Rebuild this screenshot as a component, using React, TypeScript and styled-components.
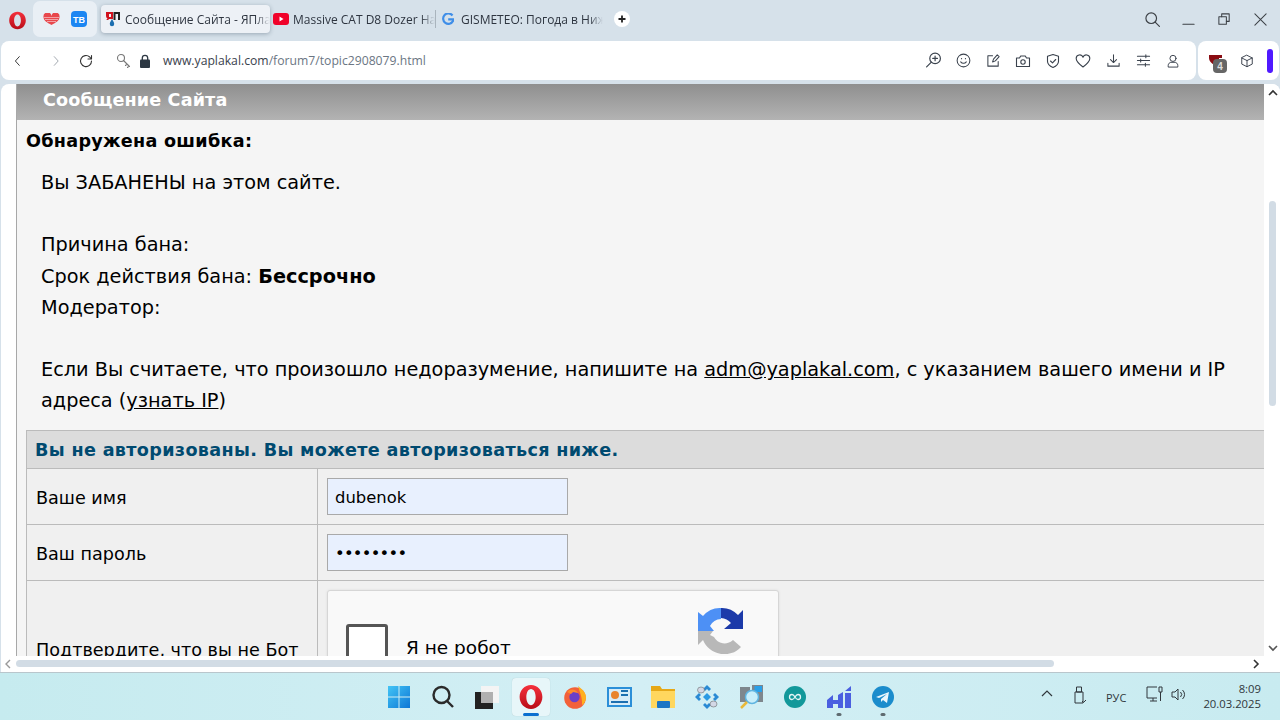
import React from "react";
import styled, { createGlobalStyle } from "styled-components";

const Global = createGlobalStyle`
  html, body { margin: 0; padding: 0; width: 1280px; height: 720px; overflow: hidden; background: #d6e1ea; }
  * { box-sizing: border-box; }
`;
const Screen = styled.div`width:1280px;height:720px;display:flex;flex-direction:column;overflow:hidden;font-family:"Open Sans","Noto Sans",sans-serif;`;
const Chrome = styled.div`height:673px;background:#d6e1ea;display:flex;flex-direction:column;flex:none;border-bottom:1px solid #b9c6cc;`;
const TabBar = styled.div`height:41px;display:flex;align-items:center;flex:none;padding-left:7px;`;
const Logo = styled.div`width:20px;display:flex;justify-content:center;margin-right:6px;`;
const Pinned = styled.div`width:64px;height:36px;border-radius:7px;background:#e9eff5;display:flex;align-items:center;justify-content:center;gap:11px;margin-top:-3px;`;
const Tab = styled.div<{ $active?: boolean; $w: number; $pad: number; $gap: number }>`
  width:${p => p.$w}px;height:28px;display:flex;align-items:center;gap:${p => p.$gap}px;padding-left:${p => p.$pad}px;overflow:hidden;white-space:nowrap;
  font-size:12px;color:#2e3540;border-radius:4px;margin-top:-3px;position:relative;flex:none;
  ${p => p.$active ? "background:#edf1f6;box-shadow:0 1px 4px rgba(40,60,80,.35);margin-left:4px;" : ""}
`;
const TabText = styled.span`flex:1;overflow:hidden;-webkit-mask-image:linear-gradient(90deg,#000 90%,transparent);mask-image:linear-gradient(90deg,#000 90%,transparent);`;
const Sep = styled.div`width:1px;height:18px;background:#a9b4bd;margin-top:-3px;flex:none;`;
const Plus = styled.div`width:16px;height:16px;border-radius:50%;background:#fff;margin:-3px 0 0 11px;display:flex;align-items:center;justify-content:center;flex:none;`;
const WinCtl = styled.div`margin-left:auto;display:flex;align-items:center;width:146px;height:38px;margin-top:-3px;color:#3c4046;flex:none;`;
const WinSlot = styled.div<{ $w: number }>`width:${p => p.$w}px;display:flex;justify-content:center;`;
const AddrRow = styled.div`height:39px;display:flex;gap:2px;flex:none;`;
const AddrBar = styled.div`width:1195px;margin-left:1px;background:#fff;border-radius:8px;display:flex;align-items:center;padding-left:10px;`;
const ExtBar = styled.div`width:81px;background:#fff;border-radius:8px;display:flex;align-items:center;padding-left:10px;position:relative;`;
const Nav = styled.div<{ $w: number }>`width:${p => p.$w}px;display:flex;flex:none;`;
const Url = styled.div`font-size:12.2px;color:#6b7683;margin-left:0;white-space:nowrap;flex:1;b{font-weight:400;color:#3a424d;}`;
const Tools = styled.div`display:flex;align-items:center;padding-right:8px;color:#3a424d;`;
const ToolSlot = styled.div`width:30px;display:flex;justify-content:center;`;
const Badge = styled.div`position:absolute;left:15px;top:18px;width:14px;height:14px;border-radius:4px;background:#666;color:#ddd;font:700 10px "Liberation Sans",sans-serif;display:flex;align-items:center;justify-content:center;`;
const CubeSlot = styled(Nav)`margin-left:16px;color:#3a424d;`;
const Pill = styled.div`width:6px;height:24px;background:#5019ff;border-radius:3px;margin-left:13px;`;
const ViewWrap = styled.div`flex:1;min-height:0;display:flex;flex-direction:column;padding-top:4px;`;
const View = styled.div`flex:1;min-height:0;background:#fff;border-radius:8px 8px 0 0;margin-left:1px;display:flex;overflow:hidden;`;
const PageClip = styled.div`width:1263px;flex:none;overflow:hidden;padding-left:15px;`;
const Page = styled.div`width:1400px;border-left:1px solid #a8a8a8;background:#f5f5f5;height:572px;font-family:"DejaVu Sans",Verdana,sans-serif;color:#000;`;
const Title = styled.div`height:36px;background:linear-gradient(#8f8f8f,#b3b3b3);color:#fff;font-weight:700;font-size:17.6px;letter-spacing:.13px;line-height:32px;padding-left:26px;`;
const Err = styled.div`font-weight:700;font-size:17.6px;letter-spacing:.28px;line-height:20px;padding:11px 0 0 9px;`;
const Msg = styled.div`font-size:19.3px;line-height:31.2px;padding:16px 0 0 24px;width:1210px;height:279px;`;
const Mail = styled.a`color:#000;text-decoration:underline;`;
const Form = styled.div`margin-left:9px;width:1400px;border:1px solid #bbb;border-bottom:0;background:#f0f0f0;`;
const FormHead = styled.div`height:37px;background:#dcdcdc;color:#004a70;font-weight:700;font-size:17.6px;letter-spacing:.33px;line-height:39px;padding-left:8px;`;
const FormRow = styled.div<{ $h: number }>`height:${p => p.$h}px;border-top:1px solid #bbb;display:flex;`;
const Label = styled.div`width:291px;border-right:1px solid #bbb;font-size:17.6px;padding:2px 0 0 9px;display:flex;align-items:center;flex:none;`;
const LabelEnd = styled(Label)`align-items:flex-start;padding-top:59px;`;
const Field = styled.div`padding:9px 0 0 9px;`;
const Input = styled.div`width:241px;height:37px;background:#e8f0fe;border:1px solid #a9a9a9;font-size:16.4px;line-height:37px;padding-left:7px;`;
const Dots = styled.span`letter-spacing:-.75px;`;
const Captcha = styled.div`width:452px;height:90px;background:#f9f9f9;border:1px solid #d6d6d6;border-radius:3px;box-shadow:0 0 3px rgba(0,0,0,.08);display:flex;position:relative;`;
const Check = styled.div`width:42px;height:42px;margin:33px 0 0 18px;background:#fff;border:3px solid #555;border-radius:3px;`;
const CapText = styled.div`font-size:18.5px;margin:46px 0 0 18px;`;
const CapLogo = styled.svg`position:absolute;left:370px;top:17px;`;
const VBar = styled.div`width:16px;flex:none;background:#fff;position:relative;`;
const VThumb = styled.div`position:absolute;left:5px;top:117px;width:7px;height:205px;background:#d2dce5;border-radius:3.5px;`;
const Arrow = styled.svg<{ $t: number }>`position:absolute;left:4px;top:${p => p.$t}px;`;
const HBar = styled.div`height:16px;background:#fff;margin-left:1px;flex:none;position:relative;`;
const HThumb = styled.div`position:absolute;left:15px;top:4px;width:1038px;height:7px;background:#d2dce5;border-radius:3.5px;`;
const HArrow = styled.svg<{ $l: number }>`position:absolute;left:${p => p.$l}px;top:3px;`;
const Taskbar = styled.div`flex:1;background:linear-gradient(90deg,#c6ebef,#d3eff5 50%,#c8ebf0);display:flex;align-items:center;position:relative;`;
const Center = styled.div`position:absolute;left:377px;top:0;height:47px;display:flex;align-items:center;`;
const TItem = styled.div<{ $on?: boolean }>`width:44px;height:38px;display:flex;align-items:center;justify-content:center;position:relative;border-radius:4px;${p => p.$on ? "background:#e7f6f9;box-shadow:0 0 1px rgba(0,0,0,.2);width:38px;margin:0 3px;" : ""}`;
const Run = styled.div<{ $on?: boolean }>`position:absolute;bottom:0;left:50%;transform:translateX(-50%);height:3px;border-radius:2px;width:${p => p.$on ? 16 : 5}px;background:${p => p.$on ? "#0a6fd0" : "#5f6b70"};`;
const Tray = styled.div`position:absolute;left:1040px;right:0;top:0;height:47px;color:#30373c;font-size:10px;`;
const TrayIcon = styled.svg<{ $l: number; $t: number }>`position:absolute;left:${p => p.$l}px;top:${p => p.$t}px;`;
const Lang = styled.div`position:absolute;left:66px;top:17px;font-size:11px;`;
const Clock = styled.div`position:absolute;right:19px;top:8px;text-align:right;line-height:15px;font-size:11.3px;`;

const I = ({ children, s = 16 }: { children: React.ReactNode; s?: number }) => (
  <svg width={s} height={s} viewBox="0 0 16 16" fill="none" stroke="currentColor" strokeWidth="1.1" strokeLinecap="round" strokeLinejoin="round">{children}</svg>
);
const Opera = ({ s = 16, id }: { s?: number; id: string }) => (
  <svg width={s} height={s} viewBox="0 0 24 24">
    <defs><linearGradient id={id} x1="0" y1="0" x2="0" y2="1"><stop offset="0" stopColor="#f5303c" /><stop offset="1" stopColor="#b80d18" /></linearGradient></defs>
    <path fillRule="evenodd" d="M12 1c6 0 10.500 5 10.500 11S18 23 12 23 1.500 18 1.500 12 6 1 12 1zm0 3.500c-2.500 0-4.300 3.300-4.300 7.500s1.800 7.500 4.300 7.500 4.300-3.300 4.300-7.500-1.800-7.500-4.300-7.500z" fill={`url(#${id})`} />
  </svg>
);

export default function App() {
  return (
    <Screen>
      <Global />
      <Chrome>
        <TabBar>
          <Logo><Opera s={19} id="op1" /></Logo>
          <Pinned>
            <svg width="17" height="12" viewBox="0 0 17 12"><path d="M8.500 12C4 9.500 .5 7.500 .5 4a3.700 3.700 0 0 1 8-1 3.700 3.700 0 0 1 8 1c0 3.500-3.500 5.500-8 8z" fill="#e8474c" /><path d="M1 4.500h15M2 6.500h13M4 8.500h9" stroke="#f7c9cb" strokeWidth=".7" /></svg>
            <svg width="16" height="16" viewBox="0 0 16 16"><rect width="16" height="16" rx="4" fill="#1c86f2" /><text x="8" y="11.500" textAnchor="middle" fill="#fff" fontSize="9" fontWeight="700" fontFamily="Liberation Sans">ТВ</text></svg>
          </Pinned>
          <Tab $active $w={169} $pad={5} $gap={5}>
            <svg width="14" height="16" viewBox="0 0 14 16" style={{ flex: "none" }}><path fillRule="evenodd" d="M0 1h7v7H5.200v0L5 8H3.200L2 9H.2l1.300-1.500C.5 7 0 6 0 4.500zM3 3v3h2V3z" fill="#d0121e" /><path d="M7.500 1H14v8h-2V3H9.500v6h-2z" fill="#222" /><path d="M6 8c1.200 2 2.200 3.500 2.200 5a2.200 2.200 0 0 1-4.400 0C3.800 11.500 4.800 10 6 8z" fill="#1c6fb0" /></svg>
            <TabText>Сообщение Сайта - ЯПлакал</TabText>
          </Tab>
          <Tab $w={165} $pad={3} $gap={4}>
            <svg width="16" height="12" viewBox="0 0 16 12" style={{ flex: "none" }}><rect width="16" height="12" rx="3" fill="#f0022a" /><path d="M6.500 3.500v5l4-2.500z" fill="#fff" /></svg>
            <TabText>Massive CAT D8 Dozer Has</TabText>
          </Tab>
          <Sep />
          <Tab $w={167} $pad={6} $gap={7}>
            <svg width="12" height="13" viewBox="0 0 12 13" style={{ flex: "none" }}><path d="M10.500 2.500A5.200 5.200 0 1 0 11 8V6.400H6.200" fill="none" stroke="#3f8ee8" strokeWidth="2.200" /></svg>
            <TabText>GISMETEO: Погода в Нижнем</TabText>
          </Tab>
          <Plus><svg width="10" height="10" viewBox="0 0 10 10"><path d="M5 1.500v7M1.500 5h7" stroke="#222" strokeWidth="1.800" /></svg></Plus>
          <WinCtl>
            <WinSlot $w={36}><I s={17}><circle cx="6.800" cy="6.800" r="5" /><path d="M10.500 10.500l4 4" /></I></WinSlot>
            <WinSlot $w={36}><I s={15}><path d="M2 13h12" /></I></WinSlot>
            <WinSlot $w={36}><I s={15}><rect x="2" y="5" width="8" height="8" /><path d="M5 5V2h8v8h-3" /></I></WinSlot>
            <WinSlot $w={36}><I s={15}><path d="M2 2l12 12M14 2L2 14" /></I></WinSlot>
          </WinCtl>
        </TabBar>
        <AddrRow>
          <AddrBar>
            <Nav $w={38}><I s={14}><path d="M9.500 3L5 8l4.500 5" stroke="#333" /></I></Nav>
            <Nav $w={29}><I s={14}><path d="M6 3l4.500 5L6 13" stroke="#a0a7ae" /></I></Nav>
            <Nav $w={38}><I s={16}><path d="M13.500 8a5.500 5.500 0 1 1-1.800-4L13.500 6M13.500 2.500V6H10" stroke="#333" /></I></Nav>
            <Nav $w={23}><I s={16}><g stroke="#777"><circle cx="5" cy="5" r="3.500" /><path d="M7.500 7.500l6 6M11 11l-1.500 1.500M13 13l-1.500 1.500" /></g></I></Nav>
            <Nav $w={24}><svg width="12" height="14" viewBox="0 0 12 14"><rect x="1" y="5.500" width="10" height="8.500" rx="1" fill="#2c3742" /><path d="M3.300 6V4a2.700 2.700 0 0 1 5.400 0v2" fill="none" stroke="#2c3742" strokeWidth="1.300" /></svg></Nav>
            <Url><b>www.yaplakal.com</b>/forum7/topic2908079.html</Url>
            <Tools>
              <ToolSlot><I s={17}><circle cx="9.500" cy="6" r="5" /><path d="M9.500 3.800v4.400M7.300 6h4.400M6 9.500l-4.500 4.500" /></I></ToolSlot>
              <ToolSlot><I s={15}><circle cx="8" cy="8" r="6.800" /><path d="M5 9.500c1.500 2 4.500 2 6 0M5.800 6h.2M10 6h.2" /></I></ToolSlot>
              <ToolSlot><I s={15}><path d="M7 3H2v11h11V9" /><path d="M7 9.500l1-3 4-4.500 2 1.800-4 4.600z" /></I></ToolSlot>
              <ToolSlot><I s={16}><path d="M1.500 5h3l1.200-2h4.600l1.200 2h3v8.500h-13z" /><circle cx="8" cy="9" r="2.200" /></I></ToolSlot>
              <ToolSlot><I s={16}><path d="M8 1.500l5.500 1.800v5c0 3-2.500 5-5.500 6.200-3-1.200-5.500-3.200-5.500-6.200v-5z" /><path d="M5.500 8l2 1.800 3.200-3.300" /></I></ToolSlot>
              <ToolSlot><I s={16}><path d="M8 14C4 11 1.200 8.500 1.200 5.500A3.500 3.500 0 0 1 8 4.200a3.500 3.500 0 0 1 6.800 1.300C14.800 8.500 12 11 8 14z" /></I></ToolSlot>
              <ToolSlot><I s={15}><path d="M8 2v8M4.800 7L8 10.200 11.200 7M2 11v3h12v-3" /></I></ToolSlot>
              <ToolSlot><I s={15}><path d="M1.500 3.500h13M1.500 8h13M1.500 12.500h13M10.500 2v3M5 6.500v3M10 11v3" /></I></ToolSlot>
              <ToolSlot><I s={14}><circle cx="8" cy="5" r="3.500" /><path d="M2.500 14.500v-1.500c0-2 2-3.500 3-3.500h5c1 0 3 1.500 3 3.500v1.500z" /></I></ToolSlot>
            </Tools>
          </AddrBar>
          <ExtBar>
            <svg width="16" height="16" viewBox="0 0 16 16"><path d="M1 2h13v3h-3V13C6 13 1 9 1 5z" fill="#8a0c12" /></svg>
            <Badge>4</Badge>
            <CubeSlot $w={14}><I s={14}><path d="M8 1.500l6 3v7l-6 3-6-3v-7zM2 4.500L8 7.500l6-3M8 7.500v7" /></I></CubeSlot>
            <Pill />
          </ExtBar>
        </AddrRow>
        <ViewWrap>
          <View>
            <PageClip>
              <Page>
                <Title>Сообщение Сайта</Title>
                <Err>Обнаружена ошибка:</Err>
                <Msg>
                  Вы ЗАБАНЕНЫ на этом сайте.<br /><br />
                  Причина бана:<br />
                  Срок действия бана: <b>Бессрочно</b><br />
                  Модератор:<br /><br />
                  Если Вы считаете, что произошло недоразумение, напишите на <Mail>adm@yaplakal.com</Mail>, с указанием вашего имени и IP адреса (<Mail>узнать IP</Mail>)
                </Msg>
                <Form>
                  <FormHead>Вы не авторизованы. Вы можете авторизоваться ниже.</FormHead>
                  <FormRow $h={56}><Label>Ваше имя</Label><Field><Input>dubenok</Input></Field></FormRow>
                  <FormRow $h={56}><Label>Ваш пароль</Label><Field><Input><Dots>••••••••</Dots></Input></Field></FormRow>
                  <FormRow $h={110}>
                    <LabelEnd>Подтвердите, что вы не Бот</LabelEnd>
                    <Field>
                      <Captcha>
                        <Check />
                        <CapText>Я не робот</CapText>
                        <CapLogo width="46" height="46" viewBox="0 0 46 46">
                          <path d="M23 0a23 23 0 0 1 17 7l5-5v19H26l7-6a14 14 0 0 0-10-5z" fill="#1c3aa9" />
                          <path d="M23 0v11a13 13 0 0 0-11 7l4 5H0V4l5 4A23 23 0 0 1 23 0z" fill="#4d90f5" />
                          <path d="M0 23h15l-3 4 4 2a12 12 0 0 0 19 3l8 7a23 23 0 0 1-38-7l-5 5z" fill="#b8b8b8" />
                        </CapLogo>
                      </Captcha>
                    </Field>
                  </FormRow>
                </Form>
              </Page>
            </PageClip>
            <VBar>
              <VThumb />
              <Arrow $t={5} width="10" height="7" viewBox="0 0 10 7"><path d="M1 6l4-4 4 4" fill="none" stroke="#333" strokeWidth="1.600" /></Arrow>
              <Arrow $t={561} width="10" height="7" viewBox="0 0 10 7"><path d="M1 1l4 4 4-4" fill="none" stroke="#555" strokeWidth="1.600" /></Arrow>
            </VBar>
          </View>
          <HBar>
            <HThumb />
            <HArrow $l={3} width="7" height="10" viewBox="0 0 7 10"><path d="M6 1L2 5l4 4" fill="none" stroke="#999" strokeWidth="1.400" /></HArrow>
            <HArrow $l={1252} width="7" height="10" viewBox="0 0 7 10"><path d="M1 1l4 4-4 4" fill="none" stroke="#333" strokeWidth="1.600" /></HArrow>
          </HBar>
        </ViewWrap>
      </Chrome>
      <Taskbar>
        <Center>
          <TItem>
            <svg width="24" height="24" viewBox="0 0 24 24"><defs><linearGradient id="w" gradientUnits="userSpaceOnUse" x1="0" y1="0" x2="24" y2="24"><stop offset="0" stopColor="#45c8f7" /><stop offset="1" stopColor="#0a73d4" /></linearGradient></defs><rect x="1" y="1" width="10.500" height="10.500" fill="url(#w)" /><rect x="12.500" y="1" width="10.500" height="10.500" fill="url(#w)" /><rect x="1" y="12.500" width="10.500" height="10.500" fill="url(#w)" /><rect x="12.500" y="12.500" width="10.500" height="10.500" fill="url(#w)" /></svg>
          </TItem>
          <TItem><svg width="24" height="24" viewBox="0 0 24 24" fill="none" stroke="#2a2a2a" strokeWidth="2.400"><circle cx="10.500" cy="10" r="8" /><path d="M16 16l6 6" /></svg></TItem>
          <TItem><svg width="26" height="26" viewBox="0 0 26 26"><rect x="7" y="2" width="18" height="17" fill="#f4f4f4" /><rect x="1" y="8" width="18" height="17" fill="#222" /><rect x="7" y="8" width="12" height="11" fill="#b0b0b0" /></svg></TItem>
          <TItem $on><Opera s={26} id="op2" /><Run $on /></TItem>
          <TItem><svg width="24" height="24" viewBox="0 0 24 24"><circle cx="12" cy="13" r="10.800" fill="#f2613a" /><path d="M15 1c4 3 8.500 7 8 12-.2 3-2 6-4 7 .5-7-2-12-4-19z" fill="#ffb01f" /><circle cx="11.500" cy="12" r="5.200" fill="#6b3fc7" /><path d="M4 7c3-4 9-3 11 1l-5-1-2 2z" fill="#ff8a2a" /></svg></TItem>
          <TItem><svg width="25" height="22" viewBox="0 0 25 22"><rect x="0" y="1" width="25" height="20" fill="#2b8fd8" /><rect x="2" y="3" width="21" height="16" fill="#d7ecf8" /><circle cx="8" cy="9" r="4" fill="#e8832c" /><path d="M14 5h7M14 9h7M4 16h17" stroke="#1c6fb0" strokeWidth="2" /></svg></TItem>
          <TItem><svg width="24" height="24" viewBox="0 0 24 24"><path d="M0 1h9l2 3h13v19H0z" fill="#e6a817" /><rect x="0" y="6" width="24" height="17" fill="#ffd75e" /><rect x="6" y="16" width="13" height="7" rx="1" fill="#1b75c4" /></svg></TItem>
          <TItem>
            <svg width="24" height="24" viewBox="0 0 24 24"><path d="M12 0l4 4-2 2-2-2-2 2-2-2zM12 24l-4-4 2-2 2 2 2-2 2 2zM0 12l4-4 2 2-2 2 2 2-2 2zM24 12l-4-4-2 2 2 2-2 2 2 2z" fill="#2a8ad4" /><path d="M12 8l4 4-4 4-4-4z" fill="#2a9ae4" /><ellipse cx="6" cy="5" rx="3.500" ry="3" fill="#d4d8e6" stroke="#555" strokeWidth=".5" /><ellipse cx="18.500" cy="19" rx="3.500" ry="3" fill="#d4d8e6" stroke="#555" strokeWidth=".5" /></svg>
          </TItem>
          <TItem><svg width="25" height="25" viewBox="0 0 25 25"><rect x="1" y="3" width="10" height="15" fill="#7e878d" /><rect x="13" y="1" width="11" height="17" fill="#7e878d" /><rect x="15.500" y="2" width="7.500" height="6" fill="#2aa0e8" /><circle cx="13" cy="13" r="6.500" fill="#c8eefa" stroke="#5fb4e0" strokeWidth="1.500" /><path d="M8 18l-6 6" stroke="#e8b93a" strokeWidth="2.500" /></svg></TItem>
          <TItem><svg width="22" height="22" viewBox="0 0 22 22"><circle cx="11" cy="11" r="11" fill="#12989a" /><path d="M8 8.500a2.500 2.500 0 1 0 0 5c3 0 3-5 6-5a2.500 2.500 0 1 1 0 5c-3 0-3-5-6-5z" fill="none" stroke="#e6f6f6" strokeWidth="1.300" /></svg></TItem>
          <TItem><svg width="24" height="23" viewBox="0 0 24 23"><path d="M0 15l6-5v13H0zM6 15h5v4H6zM11 10l5-3v16h-5zM18 6l6-5v5h-6zM18 8h6v15h-6z" fill="#4a5fe0" /></svg><Run /></TItem>
          <TItem><svg width="22" height="22" viewBox="0 0 22 22"><circle cx="11" cy="11" r="11" fill="#1b8ccc" /><path d="M4 11l13-5-2 11-4-3-2 2v-3l6-5-8 4z" fill="#eaf6fc" /></svg><Run /></TItem>
        </Center>
        <Tray>
          <TrayIcon $l={1} $t={15} width="12" height="12" viewBox="0 0 12 12"><path d="M1 8l5-5 5 5" fill="none" stroke="#30373c" strokeWidth="1.200" /></TrayIcon>
          <TrayIcon $l={33} $t={13} width="14" height="18" viewBox="0 0 14 18"><path d="M3.500 1h5v5h-5zM2 6h8v11H2zM9 15l1.500 1.500L13 14" fill="none" stroke="#30373c" /></TrayIcon>
          <Lang>РУС</Lang>
          <TrayIcon $l={106} $t={13} width="18" height="17" viewBox="0 0 18 17"><path d="M11 1H1v11h10M4 15h7M7 12v3M13 1h3v5h-3zM14.500 6v9" fill="none" stroke="#30373c" /></TrayIcon>
          <TrayIcon $l={131} $t={15} width="16" height="13" viewBox="0 0 16 13"><path d="M1 4h3l3-3v11L4 9H1zM9.500 4a3.500 3.500 0 0 1 0 5M11.500 2a6 6 0 0 1 0 9" fill="none" stroke="#30373c" /></TrayIcon>
          <Clock>8:09<br />20.03.2025</Clock>
        </Tray>
      </Taskbar>
    </Screen>
  );
}
